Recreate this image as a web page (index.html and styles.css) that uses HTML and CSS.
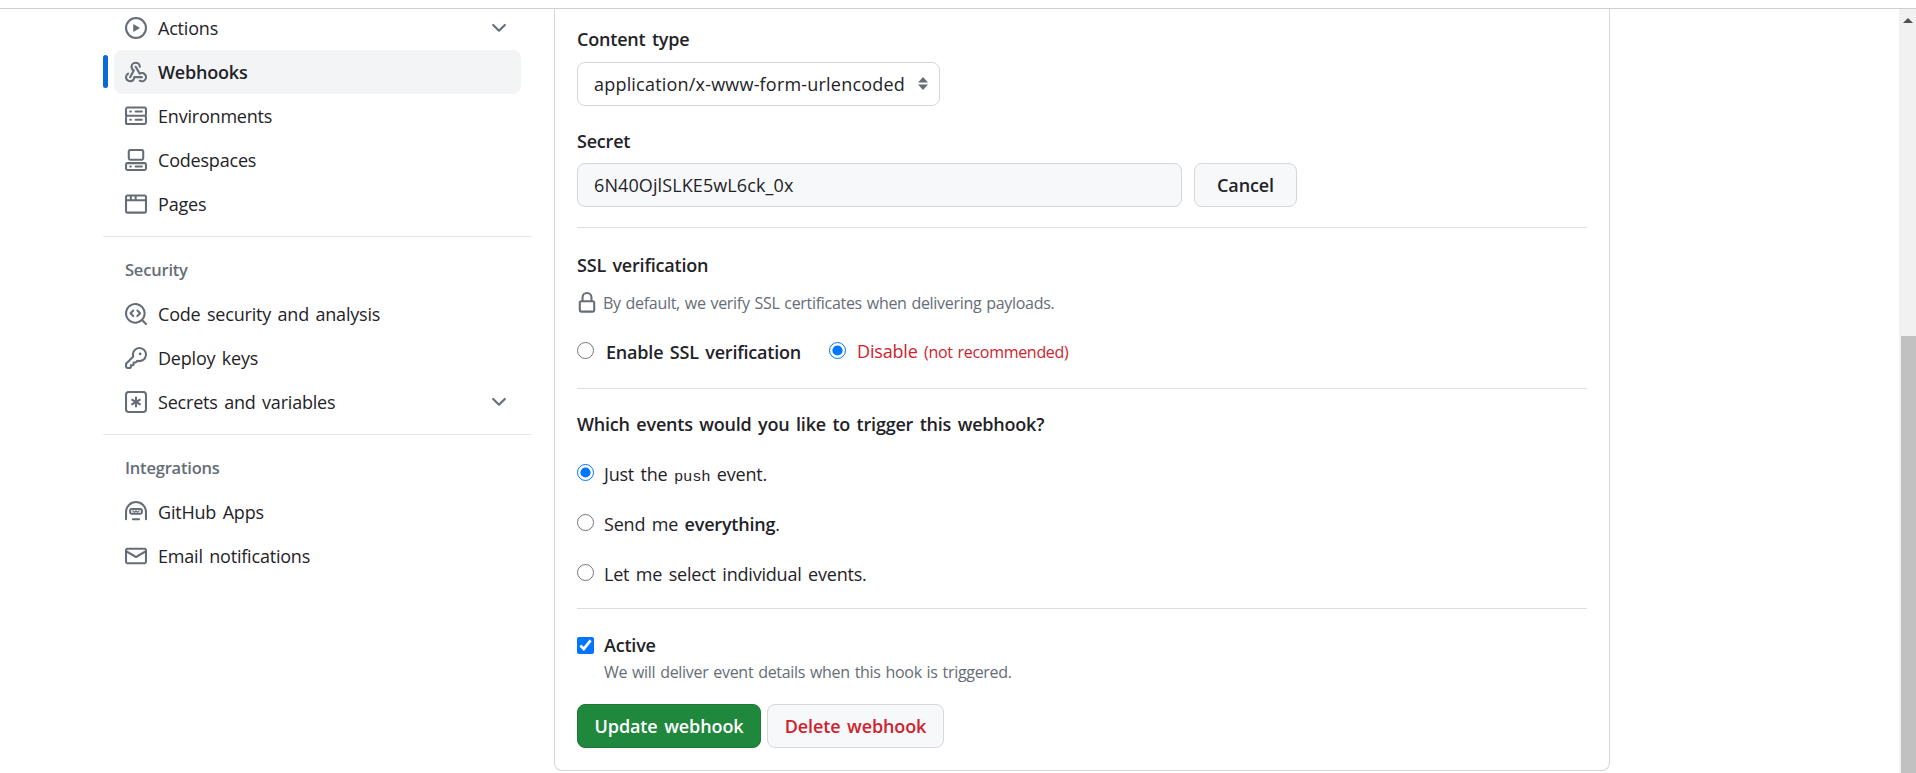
FILE: index.html
```html
<!DOCTYPE html>
<html lang="en">
<head>
<meta charset="utf-8">
<title>Webhooks</title>
<link rel="stylesheet" href="styles.css">
</head>
<body>
<div class="topline"></div>
<div class="page">
  <nav class="sidebar">
    <a class="nav-row"><svg class="ic" viewBox="0 0 16 16"><path d="M8 0a8 8 0 1 1 0 16A8 8 0 0 1 8 0ZM1.5 8a6.5 6.5 0 1 0 13 0 6.5 6.5 0 0 0-13 0Zm4.879-2.773 4.264 2.559a.25.25 0 0 1 0 .428l-4.264 2.559A.25.25 0 0 1 6 10.559V5.442a.25.25 0 0 1 .379-.215Z"/></svg><span class="nav-text">Actions</span><svg class="ic chev" viewBox="0 0 16 16"><path d="M12.78 5.22a.749.749 0 0 1 0 1.06l-4.25 4.25a.749.749 0 0 1-1.06 0L3.22 6.28a.749.749 0 1 1 1.06-1.06L8 8.939l3.72-3.719a.749.749 0 0 1 1.06 0Z"/></svg></a>
    <a class="nav-row active"><svg class="ic" viewBox="0 0 16 16"><path d="M5.5 4.25a2.25 2.25 0 0 1 4.5 0 .75.75 0 0 0 1.5 0 3.75 3.75 0 1 0-6.14 2.889l-2.272 4.258a.75.75 0 0 0 1.324.706L7 7.25a.75.75 0 0 0-.309-1.013A2.25 2.25 0 0 1 5.5 4.25Z"/><path d="M7.364 3.607a.75.75 0 0 1 1.03.257l2.608 4.349a3.75 3.75 0 1 1-.628 6.785.75.75 0 0 1 .752-1.299 2.25 2.25 0 1 0-.033-3.88.75.75 0 0 1-1.03-.256L7.107 4.636a.75.75 0 0 1 .257-1.03Z"/><path d="M2.9 8.776A.75.75 0 0 1 2.625 9.8 2.25 2.25 0 1 0 6 11.75a.75.75 0 0 1 .75-.751h5.5a.75.75 0 0 1 0 1.5H7.425a3.751 3.751 0 1 1-5.55-3.998.75.75 0 0 1 1.024.274Z"/></svg><span class="nav-text">Webhooks</span></a>
    <a class="nav-row"><svg class="ic" viewBox="0 0 16 16"><path d="M1.75 1h12.5c.966 0 1.75.784 1.75 1.75v4c0 .372-.116.717-.314 1 .198.283.314.628.314 1v4a1.75 1.75 0 0 1-1.75 1.75H1.75A1.75 1.75 0 0 1 0 13.75v-4c0-.372.116-.717.314-1a1.739 1.739 0 0 1-.314-1v-4C0 1.784.784 1 1.75 1ZM1.5 2.75v4c0 .138.112.25.25.25h12.5a.25.25 0 0 0 .25-.25v-4a.25.25 0 0 0-.25-.25H1.75a.25.25 0 0 0-.25.25Zm.25 5.75a.25.25 0 0 0-.25.25v4c0 .138.112.25.25.25h12.5a.25.25 0 0 0 .25-.25v-4a.25.25 0 0 0-.25-.25ZM7 4.75A.75.75 0 0 1 7.75 4h4.5a.75.75 0 0 1 0 1.5h-4.5A.75.75 0 0 1 7 4.75ZM7.75 10h4.5a.75.75 0 0 1 0 1.5h-4.5a.75.75 0 0 1 0-1.5ZM3 4.75A.75.75 0 0 1 3.75 4h.5a.75.75 0 0 1 0 1.5h-.5A.75.75 0 0 1 3 4.75ZM3.75 10h.5a.75.75 0 0 1 0 1.5h-.5a.75.75 0 0 1 0-1.5Z"/></svg><span class="nav-text">Environments</span></a>
    <a class="nav-row"><svg class="ic" viewBox="0 0 16 16"><path d="M0 11.25c0-.966.784-1.75 1.75-1.75h12.5c.966 0 1.75.784 1.75 1.75v3A1.75 1.75 0 0 1 14.25 16H1.75A1.75 1.75 0 0 1 0 14.25Zm2-9.5C2 .784 2.784 0 3.75 0h8.5C13.216 0 14 .784 14 1.75v5a1.75 1.75 0 0 1-1.75 1.75h-8.5A1.75 1.75 0 0 1 2 6.75Zm1.75-.25a.25.25 0 0 0-.25.25v5c0 .138.112.25.25.25h8.5a.25.25 0 0 0 .25-.25v-5a.25.25 0 0 0-.25-.25Zm-2 9.5a.25.25 0 0 0-.25.25v3c0 .138.112.25.25.25h12.5a.25.25 0 0 0 .25-.25v-3a.25.25 0 0 0-.25-.25Z"/><path d="M7 12.75a.75.75 0 0 1 .75-.75h4.5a.75.75 0 0 1 0 1.5h-4.5a.75.75 0 0 1-.75-.75Zm-4 0a.75.75 0 0 1 .75-.75h.5a.75.75 0 0 1 0 1.5h-.5a.75.75 0 0 1-.75-.75Z"/></svg><span class="nav-text">Codespaces</span></a>
    <a class="nav-row"><svg class="ic" viewBox="0 0 16 16"><path d="M0 2.75C0 1.784.784 1 1.75 1h12.5c.966 0 1.75.784 1.75 1.75v10.5A1.75 1.75 0 0 1 14.25 15H1.75A1.75 1.75 0 0 1 0 13.25ZM14.5 6h-13v7.25c0 .138.112.25.25.25h12.5a.25.25 0 0 0 .25-.25Zm-6-3.5v2h6V2.75a.25.25 0 0 0-.25-.25ZM5 2.5v2h2v-2Zm-3.25 0a.25.25 0 0 0-.25.25V4.5h2v-2Z"/></svg><span class="nav-text">Pages</span></a>
    <hr class="nav-sep">
    <h2 class="nav-head">Security</h2>
    <a class="nav-row"><svg class="ic" viewBox="0 0 16 16"><path d="M8.47 4.97a.75.75 0 0 0 0 1.06L9.94 7.5 8.47 8.97a.75.75 0 1 0 1.06 1.06l2-2a.75.75 0 0 0 0-1.06l-2-2a.75.75 0 0 0-1.06 0ZM6.53 6.03a.75.75 0 0 0-1.06-1.06l-2 2a.75.75 0 0 0 0 1.06l2 2a.75.75 0 1 0 1.06-1.06L5.06 7.5l1.47-1.47Z"/><path d="M12.246 13.307a7.501 7.501 0 1 1 1.06-1.06l2.474 2.473a.749.749 0 0 1-.326 1.275.749.749 0 0 1-.734-.215ZM1.5 7.5a6.002 6.002 0 0 0 3.608 5.504 6.002 6.002 0 0 0 6.486-1.117.75.75 0 0 1 .292-.293A6 6 0 1 0 1.5 7.5Z"/></svg><span class="nav-text">Code security and analysis</span></a>
    <a class="nav-row"><svg class="ic" viewBox="0 0 16 16"><path d="M10.5 0a5.499 5.499 0 1 1-1.288 10.848l-.932.932a.749.749 0 0 1-.53.22H7v.75a.749.749 0 0 1-.22.53l-.5.5a.749.749 0 0 1-.53.22H5v.75a.749.749 0 0 1-.22.53l-.5.5a.749.749 0 0 1-.53.22h-2A1.75 1.75 0 0 1 0 14.25v-2c0-.199.079-.389.22-.53l4.932-4.932A5.5 5.5 0 0 1 10.5 0Zm-4 5.5c-.001.431.069.86.205 1.269a.75.75 0 0 1-.181.768L1.5 12.56v1.69c0 .138.112.25.25.25h1.69l.06-.06v-1.19a.75.75 0 0 1 .75-.75h1.19l.06-.06v-1.19a.75.75 0 0 1 .75-.75h1.19l1.023-1.025a.75.75 0 0 1 .768-.18A4 4 0 1 0 6.5 5.5ZM11 6a1 1 0 1 1 0-2 1 1 0 0 1 0 2Z"/></svg><span class="nav-text">Deploy keys</span></a>
    <a class="nav-row"><svg class="ic" viewBox="0 0 16 16"><path d="M0 2.75A2.75 2.75 0 0 1 2.75 0h10.5A2.75 2.75 0 0 1 16 2.75v10.5A2.75 2.75 0 0 1 13.25 16H2.75A2.75 2.75 0 0 1 0 13.25ZM2.75 1.5c-.69 0-1.25.56-1.25 1.25v10.5c0 .69.56 1.25 1.25 1.25h10.5c.69 0 1.25-.56 1.25-1.25V2.75c0-.69-.56-1.25-1.25-1.25Z"/><path d="M8 4a.75.75 0 0 1 .75.75V6.7l1.69-.975a.75.75 0 0 1 .75 1.3L9.5 8l1.69.976a.75.75 0 0 1-.75 1.298L8.75 9.3v1.951a.75.75 0 0 1-1.5 0V9.299l-1.69.976a.75.75 0 0 1-.75-1.3L6.5 8l-1.69-.975a.75.75 0 0 1 .75-1.3l1.69.976V4.75A.75.75 0 0 1 8 4Z"/></svg><span class="nav-text">Secrets and variables</span><svg class="ic chev" viewBox="0 0 16 16"><path d="M12.78 5.22a.749.749 0 0 1 0 1.06l-4.25 4.25a.749.749 0 0 1-1.06 0L3.22 6.28a.749.749 0 1 1 1.06-1.06L8 8.939l3.72-3.719a.749.749 0 0 1 1.06 0Z"/></svg></a>
    <hr class="nav-sep">
    <h2 class="nav-head">Integrations</h2>
    <a class="nav-row"><svg class="ic" viewBox="0 0 16 16"><path fill-rule="evenodd" d="M0 8a8 8 0 1 1 16 0v5.25a.75.75 0 0 1-1.5 0V8a6.5 6.5 0 1 0-13 0v5.25a.75.75 0 0 1-1.5 0ZM3 6.75C3 5.784 3.784 5 4.75 5h6.5c.966 0 1.75.784 1.75 1.75v1.5A1.75 1.75 0 0 1 11.25 10h-6.5A1.75 1.75 0 0 1 3 8.25Zm1.75-.25a.25.25 0 0 0-.25.25v1.5c0 .138.112.25.25.25h6.5a.25.25 0 0 0 .25-.25v-1.5a.25.25 0 0 0-.25-.25ZM5.75 12.5h4.5a.75.75 0 0 1 0 1.5h-4.5a.75.75 0 0 1 0-1.5Z"/><path class="hubot-eyes" d="M5.4 7 6.9 8.2 8 7.2 9.1 8.2 10.6 7"/></svg><span class="nav-text">GitHub Apps</span></a>
    <a class="nav-row"><svg class="ic" viewBox="0 0 16 16"><path d="M1.75 2h12.5c.966 0 1.75.784 1.75 1.75v8.5A1.75 1.75 0 0 1 14.25 14H1.75A1.75 1.75 0 0 1 0 12.25v-8.5C0 2.784.784 2 1.75 2ZM1.5 12.251c0 .138.112.25.25.25h12.5a.25.25 0 0 0 .25-.25V5.809L8.38 9.397a.75.75 0 0 1-.76 0L1.5 5.809v6.442Zm13-8.181v-.32a.25.25 0 0 0-.25-.25H1.75a.25.25 0 0 0-.25.25v.32L8 7.88Z"/></svg><span class="nav-text">Email notifications</span></a>
  </nav>

  <main class="card">
    <label class="field-label first">Content type</label>
    <div class="select-wrap">
      <select class="select"><option>application/x-www-form-urlencoded</option></select>
      <svg class="select-arrows" viewBox="0 0 10 13"><path d="M5 0 10 5.5H0ZM5 13 0 7.5h10Z"/></svg>
    </div>
    <label class="field-label second">Secret</label>
    <div class="secret-row">
      <input class="secret" type="text" value="6N40OjlSLKE5wL6ck_0x">
      <button class="btn cancel" type="button">Cancel</button>
    </div>
    <hr class="form-sep">
    <div class="field-label ssl-title">SSL verification</div>
    <p class="ssl-note"><svg class="lock" viewBox="0 0 16 16"><path d="M4 4a4 4 0 0 1 8 0v2h.25c.966 0 1.75.784 1.75 1.75v5.5A1.75 1.75 0 0 1 12.25 15h-8.5A1.75 1.75 0 0 1 2 13.25v-5.5C2 6.784 2.784 6 3.75 6H4Zm8.25 3.5h-8.5a.25.25 0 0 0-.25.25v5.5c0 .138.112.25.25.25h8.5a.25.25 0 0 0 .25-.25v-5.5a.25.25 0 0 0-.25-.25ZM10.5 6V4a2.5 2.5 0 1 0-5 0v2Z"/></svg>By default, we verify SSL certificates when delivering payloads.</p>
    <div class="ssl-options">
      <label class="ssl-opt enable"><input class="radio" type="radio" name="ssl"><span class="strong">Enable SSL verification</span></label>
      <label class="ssl-opt disable"><input class="radio" type="radio" name="ssl" checked><span class="danger">Disable <small class="danger-small">(not recommended)</small></span></label>
    </div>
    <hr class="form-sep after-ssl">
    <div class="field-label events-title">Which events would you like to trigger this webhook?</div>
    <label class="event"><input class="radio" type="radio" name="ev" checked><span>Just the <code class="mono">push</code> event.</span></label>
    <label class="event"><input class="radio" type="radio" name="ev"><span>Send me <b class="strong">everything</b>.</span></label>
    <label class="event"><input class="radio" type="radio" name="ev"><span>Let me select individual events.</span></label>
    <hr class="form-sep after-events">
    <label class="active-row"><input class="check" type="checkbox" checked><span class="strong">Active</span></label>
    <p class="active-note">We will deliver event details when this hook is triggered.</p>
    <div class="actions">
      <button class="btn primary" type="button">Update webhook</button>
      <button class="btn delete" type="button">Delete webhook</button>
    </div>
  </main>

  <aside class="scrollbar">
    <svg class="scroll-up" viewBox="0 0 10 5"><path d="M5 0 10 5H0Z"/></svg>
    <div class="scroll-thumb"></div>
  </aside>
</div>
</body>
</html>
```

FILE: styles.css
```css
* { box-sizing: border-box; }
html, body { margin: 0; height: 773px; overflow: hidden; background: #fff; }
body {
  font-family: "Open Sans", "Noto Sans", sans-serif;
  font-size: 18px;
  color: #1f2328;
  letter-spacing: -0.2px;
  word-spacing: 2px;
}
.topline { height: 9px; border-bottom: 1px solid #cfcfcf; }
.page { display: flex; height: 764px; align-items: stretch; }

.sidebar { width: 429px; margin: -3px 0 0 103px; flex: none; }
.nav-row {
  position: relative; display: flex; align-items: center; gap: 11px;
  height: 44px; margin: 0 11px; padding: 0 11px; border-radius: 8px;
  color: #1f2328; line-height: 26px;
}
.nav-text { flex: 1; }
.ic { width: 22px; height: 22px; fill: #656d76; flex: none; }
.hubot-eyes { fill: none; stroke: #656d76; stroke-width: .9; }
.active { background: #f3f4f6; font-weight: 600; }
.active::before {
  content: ""; position: absolute; left: -11px; top: 5px; width: 5px; height: 33px;
  background: #0969da; border-radius: 3px;
}
.nav-sep { margin: 10px 0 0; border: 0; border-top: 1px solid #e5e8eb; }
.nav-head {
  margin: 0; padding: 22px 22px 11px; font-size: 16.5px; line-height: 22px;
  font-weight: 600; color: #656d76;
}

.card {
  width: 1056px; margin-left: 22px; flex: none; height: 762px;
  padding: 0 22px; border: 1px solid #d0d7de; border-top: 0;
  border-radius: 0 0 8px 8px;
}
.field-label { display: block; font-weight: 600; line-height: 26px; }
.first { margin: 17px 0 10px; }
.second { margin: 22px 0 9px; }
.select-wrap { position: relative; width: 363px; height: 44px; }
.select {
  appearance: none; width: 100%; height: 44px; padding: 0 16px; background: #fff;
  border: 1px solid #d0d7de; border-radius: 8px;
  font: inherit; letter-spacing: 0.2px; color: #1f2328;
}
.select-arrows { position: absolute; right: 12px; top: 15px; width: 10px; height: 13px; fill: #656d76; }
.secret-row { display: flex; gap: 12px; }
.secret {
  width: 605px; height: 44px; padding: 0 16px; background: #f6f8fa;
  border: 1px solid #d0d7de; border-radius: 8px;
  font: inherit; letter-spacing: 0.1px; color: #1f2328;
}
.btn {
  height: 44px; border-radius: 8px; border: 1px solid #d5d9dd; background: #f6f8fa;
  font: inherit; font-weight: 600; letter-spacing: -0.1px; word-spacing: inherit; color: #1f2328; padding: 0;
}
.cancel { width: 103px; }
.form-sep { margin: 20px 0 0; border: 0; border-top: 1px solid #d8dee4; }
.ssl-title { margin-top: 24px; }
.ssl-note {
  display: flex; align-items: center; gap: 5px; margin: 12px 0 0;
  font-size: 16px; letter-spacing: -0.3px; word-spacing: 1px; line-height: 26px; color: #656d76;
}
.lock { width: 22px; height: 22px; fill: #656d76; flex: none; margin-left: -1px; }
.ssl-options { display: flex; gap: 28px; margin-top: 22px; line-height: 26px; }
.ssl-opt { display: flex; align-items: center; }
.radio { width: 17px; height: 17px; margin: -3px 0 0; flex: none; }
.enable { gap: 12px; }
.disable { gap: 11px; }
.strong { font-weight: 600; }
.danger { color: #cf222e; }
.danger-small { font-size: 16px; letter-spacing: -0.3px; word-spacing: 1px; }
.after-ssl { margin-top: 23px; }
.events-title { margin-top: 22px; }
.event { display: flex; align-items: center; gap: 10px; line-height: 26px; margin-top: 24px; }
.mono { font-family: "Liberation Mono", monospace; font-size: 15.5px; line-height: 1; }
.after-events { margin-top: 21px; }
.active-row { display: flex; align-items: center; gap: 10px; margin-top: 23px; line-height: 26px; }
.check { width: 17px; height: 17px; margin: 0; flex: none; }
.active-note { margin: 2px 0 0 27px; font-size: 16px; letter-spacing: -0.3px; word-spacing: 1px; line-height: 24px; color: #656d76; }
.actions { display: flex; gap: 6px; margin-top: 20px; }
.primary { width: 184px; background: #1f883d; border-color: #1c7a37; color: #fff; }
.delete { width: 177px; color: #cf222e; }

.scrollbar { margin-left: auto; width: 17px; flex: none; background: #f1f1f1; display: flex; flex-direction: column; }
.scroll-up { width: 10px; height: 5px; fill: #505050; margin: 9px 0 0 4px; }
.scroll-thumb { margin-top: 313px; flex: 1; margin-left: 2px; background: #c1c1c1; }
```
